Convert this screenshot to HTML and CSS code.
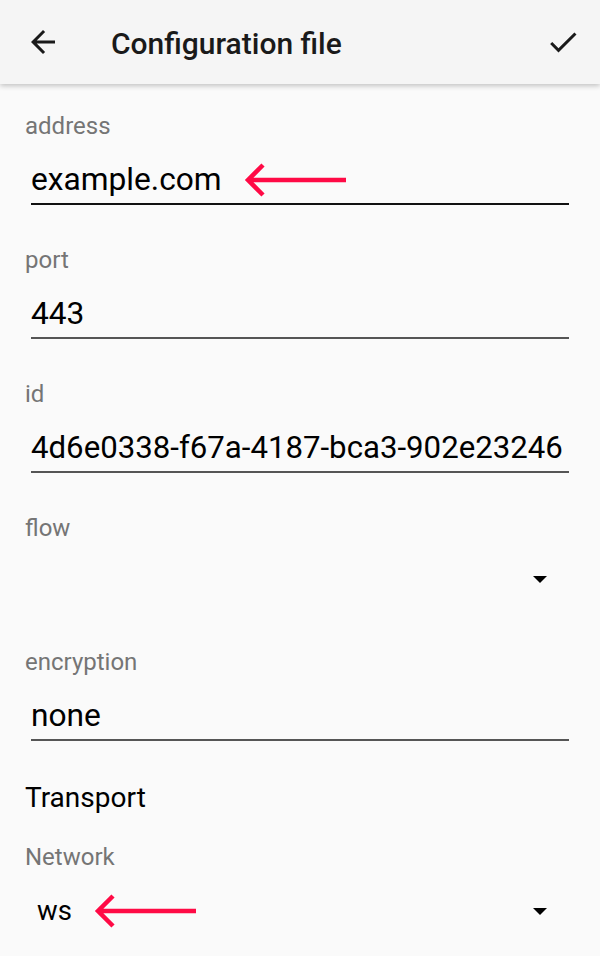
FILE: index.html
```html
<!DOCTYPE html>
<html lang="en">
<head>
<meta charset="utf-8">
<title>Configuration file</title>
<link rel="stylesheet" href="styles.css">
</head>
<body>
<header class="appbar">
  <span class="icon-btn">
    <svg viewBox="0 0 24 24" width="36" height="36"><path d="M20 11H7.83l5.59-5.59L12 4l-8 8 8 8 1.41-1.41L7.83 13H20v-2z"/></svg>
  </span>
  <h1 class="title">Configuration file</h1>
  <span class="icon-btn check">
    <svg viewBox="0 0 24 24" width="36" height="36"><path d="M9 16.17L4.83 12l-1.42 1.41L9 19 21 7l-1.41-1.41z"/></svg>
  </span>
</header>
<main class="form">
  <div class="field">
    <div class="label">address</div>
    <div class="input focused">
      <span class="value">example.com</span>
      <svg class="pointer" viewBox="0 0 106 36" width="106" height="36"><path d="M104 18H6M21 3L6 18l15 15"/></svg>
    </div>
  </div>
  <div class="field">
    <div class="label">port</div>
    <div class="input"><span class="value">443</span></div>
  </div>
  <div class="field">
    <div class="label">id</div>
    <div class="input"><span class="value clip">4d6e0338-f67a-4187-bca3-902e23246</span></div>
  </div>
  <div class="field">
    <div class="label">flow</div>
    <div class="select"><span class="value"></span><span class="caret"></span></div>
  </div>
  <div class="field">
    <div class="label">encryption</div>
    <div class="input"><span class="value">none</span></div>
  </div>
  <div class="section-title">Transport</div>
  <div class="field spinner">
    <div class="label">Network</div>
    <div class="select">
      <span class="value small">ws</span>
      <svg class="pointer" viewBox="0 0 106 36" width="106" height="36"><path d="M104 18H6M21 3L6 18l15 15"/></svg>
      <span class="caret"></span>
    </div>
  </div>
</main>
</body>
</html>
```
FILE: styles.css
```css
html, body {
  margin: 0;
  padding: 0;
}
body {
  width: 600px;
  height: 956px;
  overflow: hidden;
  background: #fafafa;
  font-family: Roboto, "Noto Sans", "Liberation Sans", sans-serif;
  color: #000;
}
.appbar {
  height: 84px;
  display: flex;
  align-items: center;
  background: #f5f5f5;
  box-shadow: 0 2px 5px rgba(0, 0, 0, 0.22);
  padding: 0 19px 0 25px;
  position: relative;
  z-index: 1;
}
.icon-btn {
  width: 36px;
  height: 36px;
  display: flex;
}
.icon-btn svg {
  fill: #1a1a1a;
}
.title {
  margin: 4px 0 0 50px;
  flex: 1;
  font-size: 30px;
  font-weight: 500;
  color: #1a1a1a;
  line-height: 36px;
}
.form {
  padding: 0 31px 0 25px;
}
.field {
  height: 134px;
  padding-top: 30px;
  box-sizing: border-box;
}
.label {
  font-size: 24px;
  line-height: 24px;
  color: #757575;
  margin-bottom: 24px;
}
.input, .select {
  margin-left: 6px;
  height: 41px;
  box-sizing: border-box;
  display: flex;
  align-items: flex-start;
  white-space: nowrap;
  overflow: hidden;
}
.input {
  height: 43px;
  border-bottom: 2px solid #555;
}
.input.focused {
  border-bottom-color: #111;
}
.value {
  font-size: 31.7px;
  line-height: 36px;
  color: #000;
}
.value.clip {
  font-size: 31.2px;
}
.value.small {
  font-size: 27.5px;
  margin-left: 6px;
}
.pointer {
  flex: none;
  margin-left: 20px;
  fill: none;
  stroke: #ff0a45;
  stroke-width: 4.5;
}
.caret {
  margin-left: auto;
  margin-right: 22px;
  margin-top: 12px;
  width: 0;
  height: 0;
  border-left: 7.5px solid transparent;
  border-right: 7.5px solid transparent;
  border-top: 7.5px solid #000;
}
.section-title {
  font-size: 28px;
  line-height: 32px;
  margin-top: 28px;
  color: #000;
}
.field.spinner {
  padding-top: 31px;
  height: auto;
}
.spinner .select {
  height: 36px;
}
.spinner .caret {
  margin-top: 15px;
}
```
